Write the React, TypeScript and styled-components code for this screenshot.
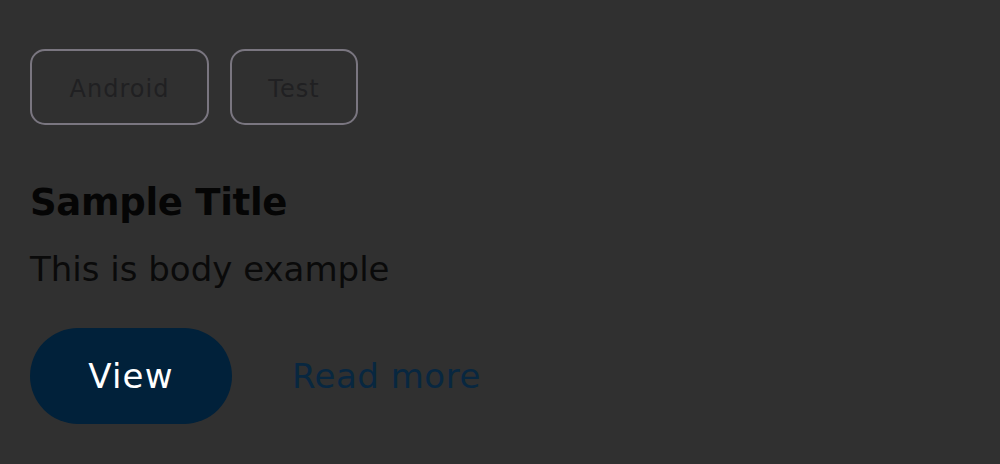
import React from "react";
import styled, { createGlobalStyle } from "styled-components";

const Global = createGlobalStyle`
  html, body { margin: 0; padding: 0; background: #303030; }
  body { font-family: "DejaVu Sans", "Open Sans", sans-serif; }
`;

const Card = styled.div`
  width: 1000px;
  height: 464px;
  box-sizing: border-box;
  padding: 49px 30px 0 30px;
  background: #303030;
  display: flex;
  flex-direction: column;
  align-items: flex-start;
`;

const TagRow = styled.div`
  display: flex;
  gap: 21px;
`;

const Tag = styled.span<{ $w: number }>`
  box-sizing: border-box;
  width: ${(p) => p.$w}px;
  height: 76px;
  padding-top: 3px;
  border: 2px solid #7a7680;
  border-radius: 15px;
  display: flex;
  align-items: center;
  justify-content: center;
  font-size: 24px;
  color: #202022;
  letter-spacing: 1px;
`;

const Title = styled.h2`
  margin: 54px 0 0 0;
  font-size: 37px;
  line-height: 48px;
  font-weight: 700;
  color: #050505;
  letter-spacing: -0.3px;
`;

const Body = styled.p`
  margin: 22px 0 0 0;
  font-size: 34px;
  line-height: 40px;
  color: #0a0a0a;
`;

const Actions = styled.div`
  margin-top: 39px;
  display: flex;
  align-items: center;
  gap: 60px;
`;

const PrimaryButton = styled.button`
  width: 202px;
  height: 96px;
  border: none;
  border-radius: 48px;
  background: #01213a;
  color: #ffffff;
  font-family: inherit;
  font-size: 34px;
  letter-spacing: 1.2px;
  padding: 0;
`;

const LinkButton = styled.a`
  font-size: 34px;
  letter-spacing: 0.5px;
  color: #082740;
  text-decoration: none;
`;

export default function App() {
  return (
    <>
      <Global />
      <Card>
        <TagRow>
          <Tag $w={179}>Android</Tag>
          <Tag $w={128}>Test</Tag>
        </TagRow>
        <Title>Sample Title</Title>
        <Body>This is body example</Body>
        <Actions>
          <PrimaryButton>View</PrimaryButton>
          <LinkButton>Read more</LinkButton>
        </Actions>
      </Card>
    </>
  );
}
